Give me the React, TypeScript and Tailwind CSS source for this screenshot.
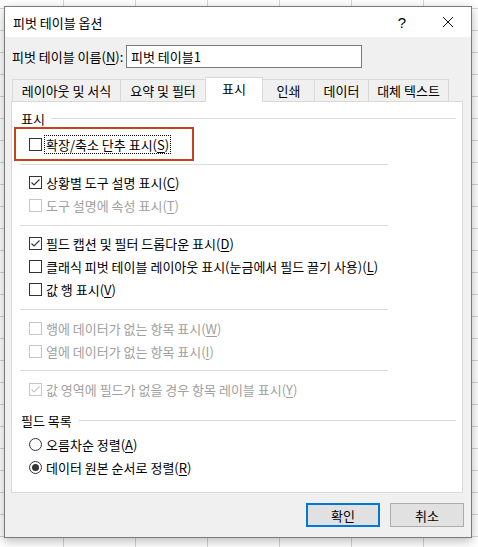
import type { ReactNode } from "react";

const FONT = "font-['Noto_Sans_CJK_KR','Noto_Sans',sans-serif]";

type CheckProps = {
  checked?: boolean;
  disabled?: boolean;
};

function CheckBox({ checked = false, disabled = false }: CheckProps) {
  return (
    <span
      className={`flex h-[13px] w-[13px] shrink-0 items-center justify-center border bg-white ${
        disabled ? "border-[#c6c6c6]" : "border-[#333333]"
      }`}
    >
      {checked ? (
        <svg viewBox="0 0 11 11" className="h-[11px] w-[11px]">
          <path
            d="M1.5 5.5 L4 8 L9.5 2.5"
            fill="none"
            stroke={disabled ? "#c6c6c6" : "#333333"}
            strokeWidth="1.1"
          />
        </svg>
      ) : null}
    </span>
  );
}

function Key({ k }: { k: string }) {
  return (
    <>
      (<span className="underline underline-offset-2">{k}</span>)
    </>
  );
}

function CheckRow({
  label,
  k,
  checked,
  disabled,
}: {
  label: string;
  k: string;
  checked?: boolean;
  disabled?: boolean;
}) {
  return (
    <div className="flex h-[23px] items-center pl-[17px]">
      <CheckBox checked={checked} disabled={disabled} />
      <span
        className={`ml-[4px] whitespace-nowrap leading-none ${
          disabled ? "text-[#a0a0a0]" : "text-black"
        }`}
      >
        {label}
        <Key k={k} />
      </span>
    </div>
  );
}

function Separator() {
  return <div className="ml-[8px] h-px w-[368px] bg-[#dcdcdc]" />;
}

function GroupHeader({ children }: { children: ReactNode }) {
  return (
    <div className="flex items-center gap-[6px] pl-[9px] pr-[6px]">
      <span className="leading-none text-black">{children}</span>
      <div className="h-px flex-1 bg-[#dcdcdc]" />
    </div>
  );
}

function Radio({ label, k, selected }: { label: string; k: string; selected?: boolean }) {
  return (
    <div className="flex h-[23px] items-center pl-[17px]">
      <span className="flex h-[13px] w-[13px] shrink-0 items-center justify-center rounded-full border border-[#333333] bg-white">
        {selected ? <span className="h-[7px] w-[7px] rounded-full bg-[#333333]" /> : null}
      </span>
      <span className="ml-[4px] whitespace-nowrap leading-none text-black">
        {label}
        <Key k={k} />
      </span>
    </div>
  );
}

const tabs = [
  { label: "레이아웃 및 서식", w: "w-[109px]" },
  { label: "요약 및 필터", w: "w-[86px]" },
  { label: "표시", w: "w-[58px]", active: true },
  { label: "인쇄", w: "w-[53px]" },
  { label: "데이터", w: "w-[55px]" },
  { label: "대체 텍스트", w: "w-[81px]" },
];

export default function App() {
  return (
    <div
      className={`h-[547px] w-[478px] overflow-hidden bg-white bg-[linear-gradient(to_right,#d4d4d4_1px,transparent_1px),linear-gradient(to_bottom,#d4d4d4_1px,transparent_1px)] [background-position:63px_8px] [background-size:72px_22px] pl-[4px] pt-[6px] text-[13px] ${FONT}`}
    >
      <div className="flex w-[468px] flex-col border border-[#7a7a7a] bg-[#f0f0f0] shadow-[0_3px_10px_rgba(0,0,0,0.28)]">
        {/* title bar */}
        <div className="flex h-[30px] items-center bg-white">
          <span className="pl-[8px] text-[13px] leading-none text-black">피벗 테이블 옵션</span>
          <span className="ml-auto flex h-full w-[46px] items-center justify-center font-['Liberation_Sans',sans-serif] text-[15px] leading-none text-black">
            ?
          </span>
          <span className="flex h-full w-[46px] items-center justify-center">
            <svg viewBox="0 0 10 10" className="h-[10px] w-[10px]">
              <path d="M0 0 L10 10 M10 0 L0 10" stroke="#111" strokeWidth="1" />
            </svg>
          </span>
        </div>

        {/* name row */}
        <div className="mt-[8px] flex items-center pl-[7px]">
          <span className="w-[114px] whitespace-nowrap leading-none text-black">
            피벗 테이블 이름<Key k="N" />:
          </span>
          <div className="flex h-[23px] w-[236px] items-center border border-[#7a7a7a] bg-white pl-[4px] leading-none text-black">
            피벗 테이블1
          </div>
        </div>

        {/* tabs */}
        <div className="ml-[7px] mt-[9px] flex h-[24px] items-end">
          {tabs.map((t, i) => (
            <div
              key={t.label}
              className={`flex shrink-0 items-center justify-center border-x border-t border-[#d9d9d9] leading-none text-black ${t.w} ${
                i > 0 ? "-ml-px" : ""
              } ${
                t.active
                  ? "relative z-10 -mb-px h-[25px] bg-white pb-[3px]"
                  : "h-[22px] bg-[#f0f0f0]"
              }`}
            >
              {t.label}
            </div>
          ))}
        </div>

        {/* panel */}
        <div className="ml-[6px] flex h-[392px] w-[452px] flex-col border border-[#d9d9d9] bg-white">
          <div className="mt-[8px] flex h-[17px] items-center">
            <div className="w-full">
              <GroupHeader>표시</GroupHeader>
            </div>
          </div>
          <div className="ml-[2px] flex h-[34px] w-[180px] items-center border-2 border-[#c4441c] pl-[13px]">
            <CheckBox />
            <span className="ml-[2px] flex h-[19px] items-center whitespace-nowrap border border-dotted border-black px-[1px] leading-none text-black">
              확장/축소 단추 표시<Key k="S" />
            </span>
          </div>
          <div className="mt-[3px]">
            <Separator />
          </div>
          <div className="mt-[6px]">
            <CheckRow label="상황별 도구 설명 표시" k="C" checked />
            <CheckRow label="도구 설명에 속성 표시" k="T" disabled />
          </div>
          <div className="mt-[8px]">
            <Separator />
          </div>
          <div className="mt-[6px]">
            <CheckRow label="필드 캡션 및 필터 드롭다운 표시" k="D" checked />
            <CheckRow label="클래식 피벗 테이블 레이아웃 표시(눈금에서 필드 끌기 사용)" k="L" />
            <CheckRow label="값 행 표시" k="V" />
          </div>
          <div className="mt-[8px]">
            <Separator />
          </div>
          <div className="mt-[7px]">
            <CheckRow label="행에 데이터가 없는 항목 표시" k="W" disabled />
            <CheckRow label="열에 데이터가 없는 항목 표시" k="I" disabled />
          </div>
          <div className="mt-[7px]">
            <Separator />
          </div>
          <div className="mt-[7px]">
            <CheckRow label="값 영역에 필드가 없을 경우 항목 레이블 표시" k="Y" checked disabled />
          </div>
          <div className="mt-[10px] flex h-[18px] items-center">
            <div className="w-full">
              <GroupHeader>필드 목록</GroupHeader>
            </div>
          </div>
          <div className="mt-[4px]">
            <Radio label="오름차순 정렬" k="A" />
            <Radio label="데이터 원본 순서로 정렬" k="R" selected />
          </div>
        </div>

        {/* buttons */}
        <div className="mb-[10px] mr-[7px] mt-[10px] flex justify-end gap-[10px]">
          <button className="flex h-[24px] w-[74px] items-center justify-center border-2 border-[#0078d7] bg-[#e1e1e1] leading-none text-black">
            확인
          </button>
          <button className="flex h-[24px] w-[74px] items-center justify-center border border-[#adadad] bg-[#e1e1e1] leading-none text-black">
            취소
          </button>
        </div>
      </div>
    </div>
  );
}
